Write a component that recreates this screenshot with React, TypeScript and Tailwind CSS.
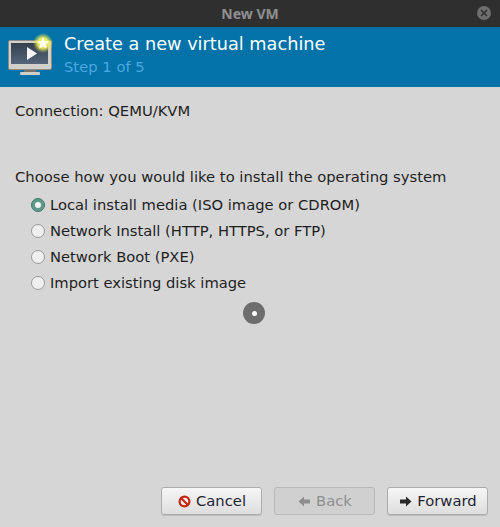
import type { ReactNode } from "react";

const opcije = [
  { label: "Local install media (ISO image or CDROM)", izabrano: true },
  { label: "Network Install (HTTP, HTTPS, or FTP)", izabrano: false },
  { label: "Network Boot (PXE)", izabrano: false },
  { label: "Import existing disk image", izabrano: false },
];

function VmIcon() {
  return (
    <svg width="48" height="48" viewBox="0 0 48 48" className="shrink-0">
      <defs>
        <radialGradient id="sjaj">
          <stop offset="0.5" stopColor="#f4f25a" stopOpacity="0.95" />
          <stop offset="1" stopColor="#e8e83a" stopOpacity="0" />
        </radialGradient>
        <linearGradient id="ekran" x1="0" y1="0" x2="0" y2="1">
          <stop offset="0" stopColor="#33404f" />
          <stop offset="1" stopColor="#56657a" />
        </linearGradient>
      </defs>
      <rect x="16" y="36" width="12" height="4" fill="#77736c" />
      <rect x="12" y="39" width="20" height="3" rx="1" fill="#cfcdc8" />
      <rect x="0.5" y="7.5" width="43" height="29" rx="1.5" fill="#d2d0cb" stroke="#8d8b86" />
      <rect x="3" y="10" width="37" height="21" fill="url(#ekran)" />
      <path d="M19 14 L29 20.5 L19 27 Z" fill="#f7f7f7" />
      <circle cx="35" cy="10" r="10" fill="url(#sjaj)" />
      <path
        d="M35 4 L36.8 8 L41.2 8.4 L37.9 11.3 L38.9 15.6 L35 13.4 L31.1 15.6 L32.1 11.3 L28.8 8.4 L33.2 8 Z"
        fill="#fdfdf0"
      />
    </svg>
  );
}

function Radio({ label, izabrano }: { label: string; izabrano: boolean }) {
  return (
    <div className="flex h-[26px] items-center gap-[5px]">
      {izabrano ? (
        <span className="flex h-[14px] w-[14px] items-center justify-center rounded-full border border-[#3f7a6b] bg-[#5f9a88]">
          <span className="h-[6px] w-[6px] rounded-full bg-[#f2f5f4]" />
        </span>
      ) : (
        <span className="h-[14px] w-[14px] rounded-full border border-[#9a9a9a] bg-[#efefef]" />
      )}
      <span className="text-[14.72px]">{label}</span>
    </div>
  );
}

function Dugme({
  children,
  ikona,
  onemoguceno,
}: {
  children: ReactNode;
  ikona: ReactNode;
  onemoguceno?: boolean;
}) {
  return (
    <div
      className={
        onemoguceno
          ? "flex h-[28px] w-[101px] items-center justify-center gap-[5px] rounded-[3px] border border-[#b8b8b8] bg-[#d0d0d0] pl-[1px] text-[#8e8e8e]"
          : "flex h-[28px] w-[101px] items-center justify-center gap-[5px] rounded-[3px] border border-[#acacac] bg-gradient-to-b from-[#f6f6f6] to-[#dedede] pl-[1px] text-[#1f2433] shadow-[0_1px_0_#bdbdbd]"
      }
    >
      {ikona}
      <span>{children}</span>
    </div>
  );
}

export default function App() {
  return (
    <div className="relative flex h-[527px] w-[500px] flex-col overflow-hidden bg-[#d6d6d6] font-['DejaVu_Sans',sans-serif] text-[14.77px] text-[#1e1e1e]">
      {/* Naslovna traka */}
      <div className="relative flex h-[27px] items-center justify-center bg-[#2f2f2f] font-['Noto_Sans',sans-serif] text-[14px] font-bold text-[#8f8f8f]">
        New VM
        <div className="absolute right-[9px] top-[6px] flex h-[14px] w-[14px] items-center justify-center rounded-full bg-[#6e6e6e]">
          <svg width="8" height="8" viewBox="0 0 8 8">
            <path d="M1 1 L7 7 M7 1 L1 7" stroke="#2f2f2f" strokeWidth="1.6" />
          </svg>
        </div>
      </div>

      {/* Zaglavlje */}
      <div className="flex h-[60px] items-center gap-[8px] bg-[#0272a8] pl-[8px]">
        <VmIcon />
        <div className="-mt-[4px]">
          <p className="text-[17.72px] leading-[24px] text-white">Create a new virtual machine</p>
          <p className="text-[14.77px] leading-[22px] text-[#4aa8e2]">Step 1 of 5</p>
        </div>
      </div>

      <div className="flex flex-1 flex-col px-[15px]">
        <p className="mt-[15px] leading-[18px]">Connection: QEMU/KVM</p>
        <p className="mt-[48px] leading-[18px]">Choose how you would like to install the operating system</p>
        <div className="mt-[6px] pl-[16px]">
          {opcije.map((o) => (
            <Radio key={o.label} label={o.label} izabrano={o.izabrano} />
          ))}
        </div>
      </div>

      {/* Dugmad */}
      <div className="flex justify-end gap-[12px] pb-[12px] pr-[12px]">
        <Dugme
          ikona={
            <svg width="13" height="13" viewBox="0 0 13 13">
              <circle cx="6.5" cy="6.5" r="4.9" fill="#f4f0ee" stroke="#c4260f" strokeWidth="2.2" />
              <path d="M3 3 L10 10" stroke="#c4260f" strokeWidth="2.2" />
            </svg>
          }
        >
          Cancel
        </Dugme>
        <Dugme
          onemoguceno
          ikona={
            <svg width="13" height="11" viewBox="0 0 13 11">
              <path d="M0.5 5.5 L6 0.5 V3.5 H12 V7.5 H6 V10.5 Z" fill="#8e8e8e" />
            </svg>
          }
        >
          Back
        </Dugme>
        <Dugme
          ikona={
            <svg width="13" height="11" viewBox="0 0 13 11">
              <path d="M12.5 5.5 L7 0.5 V3.5 H1 V7.5 H7 V10.5 Z" fill="#2a2a2a" />
            </svg>
          }
        >
          Forward
        </Dugme>
      </div>

      {/* Kursor u čekanju */}
      <div className="absolute left-[243px] top-[302px] flex h-[22px] w-[22px] items-center justify-center rounded-full bg-[#6d6d6d]">
        <span className="h-[5px] w-[5px] rounded-full bg-white" />
      </div>
    </div>
  );
}
